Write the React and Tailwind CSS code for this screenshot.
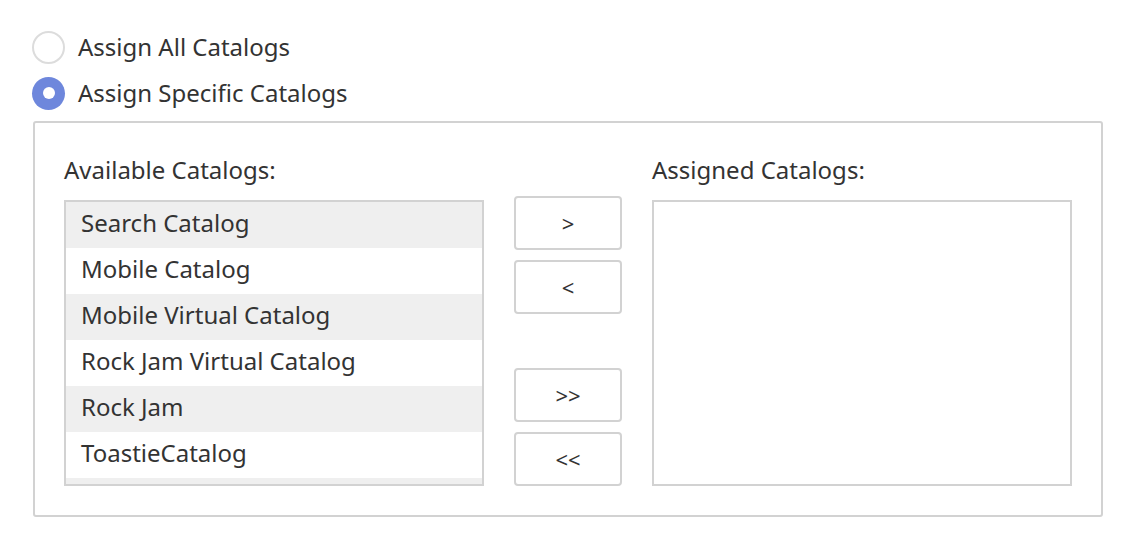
import React, { useState } from "react";

const available = [
  "Search Catalog",
  "Mobile Catalog",
  "Mobile Virtual Catalog",
  "Rock Jam Virtual Catalog",
  "Rock Jam",
  "ToastieCatalog",
  "",
];

// radio circle
const Radio = ({ checked }) =>
  checked ? (
    <span className="flex h-[33px] w-[33px] items-center justify-center rounded-full bg-[#6e87dc]">
      <span className="h-[12px] w-[12px] rounded-full bg-white" />
    </span>
  ) : (
    <span className="h-[33px] w-[33px] rounded-full border-2 border-[#dcdcdc] bg-white" />
  );

const MoveButton = ({ label, className = "" }) => (
  <button
    className={`flex h-[54px] w-[108px] items-center justify-center rounded-[4px] border-2 border-[#d2d2d2] bg-white text-[22px] text-[#333] ${className}`}
  >
    {label}
  </button>
);

const App = () => {
  const [mode, setMode] = useState("specific");

  return (
    <div
      className="min-h-[544px] bg-white pt-[24px] pl-[32px] text-[24px] text-[#333]"
      style={{ fontFamily: '"Noto Sans", "Open Sans", sans-serif' }}
    >
      <label className="flex h-[46px] items-center gap-[13px]" onClick={() => setMode("all")}>
        <Radio checked={mode === "all"} />
        <span className="-mt-[1px]">Assign All Catalogs</span>
      </label>
      <label className="flex h-[46px] items-center gap-[13px]" onClick={() => setMode("specific")}>
        <Radio checked={mode === "specific"} />
        <span className="-mt-[1px]">Assign Specific Catalogs</span>
      </label>

      <div className="mt-[5px] ml-[1px] flex w-[1070px] rounded-[3px] border-2 border-[#d2d2d2] pt-[32px] pl-[29px] pb-[29px]">
        {/* Available */}
        <div className="w-[420px]">
          <div className="h-[30px] leading-[30px]">Available Catalogs:</div>
          <div className="mt-[15px] h-[286px] overflow-hidden border-2 border-[#d2d2d2]">
            {available.map((name, i) => (
              <div
                key={i}
                className={`h-[46px] pl-[15px] leading-[42px] ${i % 2 === 0 ? "bg-[#efefef]" : "bg-white"}`}
              >
                {name}
              </div>
            ))}
          </div>
        </div>

        {/* buttons */}
        <div className="ml-[30px] flex flex-col pt-[41px]">
          <MoveButton label=">" />
          <MoveButton label="<" className="mt-[10px]" />
          <MoveButton label=">>" className="mt-[54px]" />
          <MoveButton label="<<" className="mt-[10px]" />
        </div>

        {/* Assigned */}
        <div className="ml-[30px] w-[420px]">
          <div className="h-[30px] leading-[30px]">Assigned Catalogs:</div>
          <div className="mt-[15px] h-[286px] border-2 border-[#d2d2d2]" />
        </div>
      </div>
    </div>
  );
};

export default App;
